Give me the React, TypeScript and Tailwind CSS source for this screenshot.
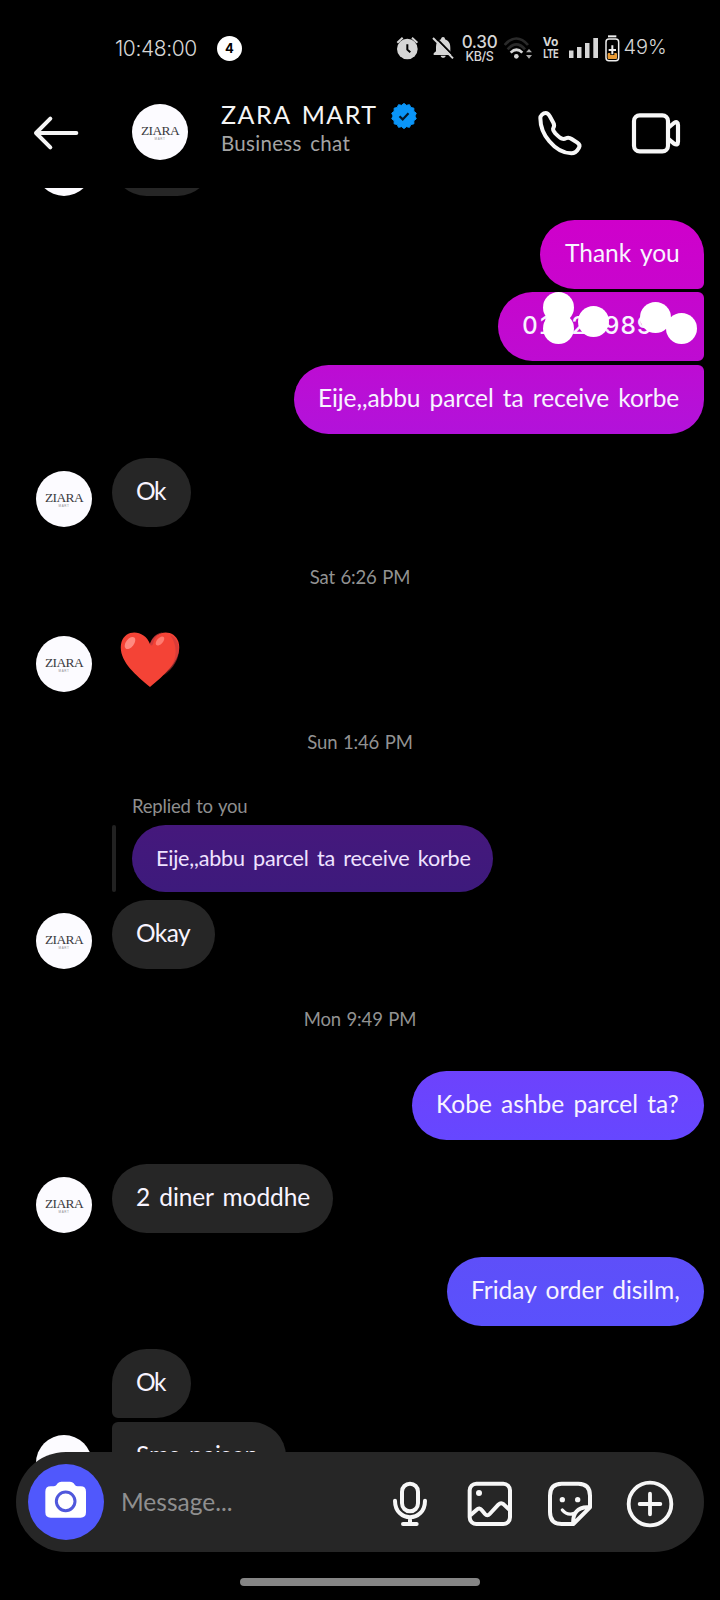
import type { ReactNode } from "react";

const badgePoints = Array.from({ length: 28 }, (_, i) => {
  const radius = i % 2 === 0 ? 12.6 : 10.9;
  const angle = (Math.PI * 2 * i) / 28 - Math.PI / 2;
  return `${(13 + radius * Math.cos(angle)).toFixed(2)},${(13 + radius * Math.sin(angle)).toFixed(2)}`;
}).join(" ");

function Avatar() {
  return (
    <div className="flex size-14 shrink-0 flex-col items-center justify-center rounded-full bg-[#fcfbff] text-[#3a3a40]">
      <span className="font-['Liberation_Serif',serif] text-[13.5px] leading-[15px] tracking-[-0.6px] whitespace-nowrap">
        ZIARA
      </span>
      <span className="-mt-px font-['Liberation_Sans',sans-serif] text-[3px] leading-[5px] tracking-[0.6px] text-[#8d8d92]">
        MART
      </span>
    </div>
  );
}

function Bubble({ className, children }: { className: string; children?: ReactNode }) {
  return (
    <div
      className={`relative flex h-[69px] shrink-0 items-center pb-[3px] pl-6 text-[24.5px] whitespace-pre text-[#f8f4ff] ${className}`}
    >
      {children}
    </div>
  );
}

function Incoming({ avatar = true, className = "", children }: { avatar?: boolean; className?: string; children: ReactNode }) {
  return (
    <div className={`flex min-h-[69px] shrink-0 items-end pl-9 ${className}`}>
      <div className="w-[76px] shrink-0">{avatar && <Avatar />}</div>
      {children}
    </div>
  );
}

function Stamp({ children }: { children: ReactNode }) {
  return (
    <div className="flex h-24 shrink-0 items-center justify-center pt-[5px] text-[18.5px] tracking-[-0.15px] text-[#929292] [word-spacing:1px]">
      <span className="whitespace-nowrap">{children}</span>
    </div>
  );
}

function Blob({ className }: { className: string }) {
  return <i className={`absolute size-[31px] rounded-full bg-white ${className}`} />;
}

function StatusBar() {
  return (
    <div className="flex h-[76px] shrink-0 items-start pt-[35px] font-['Inter','Liberation_Sans',sans-serif] text-[#d6d6d6] [word-spacing:0px]">
      <span className="ml-[115px] w-[102px] pt-px text-[21px] leading-[26px] font-light tracking-[-0.4px]">10:48:00</span>
      <span className="mt-px flex size-[25px] items-center justify-center rounded-full bg-white text-[13px] font-bold text-black">
        4
      </span>
      <svg className="mt-px ml-[154px]" width="23" height="25" viewBox="108 48 69 75" fill="none">
        <circle cx="142" cy="87" r="31" fill="#d6d6d6" />
        <path d="M112 68L128 53M172 68L156 53" stroke="#d6d6d6" strokeWidth="6" />
        <path d="M142 73V89L151 97" stroke="#000" strokeWidth="6" />
      </svg>
      <svg className="mt-px ml-[12.5px]" width="23" height="25" viewBox="214 48 69 75" fill="none">
        <path d="M247 51C252 51 253 54 253 58C266 63 269 72 269 84V98L275 105H219V100L226 94V80C226 69 231 61 241 58C241 54 243 51 247 51ZM240 107H255C254 115 241 115 240 107Z" fill="#d6d6d6" />
        <path d="M222 50L284 113" stroke="#000" strokeWidth="6" />
        <path d="M217 54L277 115" stroke="#d6d6d6" strokeWidth="6" />
      </svg>
      <div className="-mt-px ml-[7px] flex w-[36px] flex-col items-center font-medium">
        <span className="text-[17px] leading-[17px] tracking-[-0.3px]">0.30</span>
        <span className="text-[12.5px] leading-[12px] tracking-[-0.4px]">KB/S</span>
      </div>
      <svg className="ml-[6px]" width="29" height="26" viewBox="432 45 87 78" fill="none">
        <path d="M434 75C456 49 482 49 504 75M443 88C460 68 478 68 495 88" stroke="#2a2a2a" strokeWidth="8" />
        <path d="M452 98C463 87 476 87 487 98" stroke="#d6d6d6" strokeWidth="8" />
        <circle cx="469" cy="109" r="7" fill="#d6d6d6" />
        <path d="M498 97L507 87L516 97ZM498 105L507 116L516 105Z" fill="#a8a8a8" />
      </svg>
      <div className="ml-[9px] flex w-[18px] flex-col items-center text-[12px] leading-[12px] font-bold">
        <span className="mt-px">Vo</span>
        <span className="scale-x-[.78] tracking-[-0.5px]">LTE</span>
      </div>
      <svg className="mt-[3px] ml-[9px]" width="29" height="20" viewBox="0 0 29 20" fill="#d6d6d6">
        <path d="M0 12.500h4.500V20H0zM8 9h4.500v11H8zM16 5h4.500v15H16zM24.300 0H29v20h-4.700z" />
      </svg>
      <svg className="ml-[7px]" width="15" height="27" viewBox="735 45 45 81" fill="none">
        <path d="M744 49H769" stroke="#eee" strokeWidth="6" />
        <rect x="743" y="99" width="28" height="18" rx="3" fill="#e79a35" />
        <rect x="738" y="57" width="38" height="65" rx="9" stroke="#eee" strokeWidth="4.500" />
        <path d="M757 74V105M744 90H770" stroke="#000" strokeWidth="12" />
        <path d="M757 76V103M746 90H768" stroke="#eee" strokeWidth="6" />
      </svg>
      <span className="ml-1 text-[20px] leading-[24px] font-light">49%</span>
    </div>
  );
}

function Header() {
  return (
    <header className="flex h-[112px] shrink-0 items-center">
      <svg className="mt-px ml-8" width="48" height="38" viewBox="96 281 144 114" fill="none" stroke="#f5f5f5" strokeWidth="12" strokeLinecap="round" strokeLinejoin="round">
        <path d="M109 338H229M151 295L108 338L151 381" />
      </svg>
      <div className="ml-[52px]">
        <Avatar />
      </div>
      <div className="ml-[33px] flex w-[315px] flex-col pb-1.5">
        <div className="flex h-7 items-center">
          <span className="w-[170px] pb-0.5 text-[25px] tracking-[1.5px] whitespace-nowrap text-[#f5f5f5]">ZARA MART</span>
          <svg width="26" height="26" viewBox="0 0 26 26" fill="none">
            <polygon points={badgePoints} fill="#0a95f8" stroke="#0a95f8" strokeLinejoin="round" />
            <path d="M8.500 13.300L11.700 16.400L17.500 10.300" stroke="#04182a" strokeWidth="2.200" />
          </svg>
        </div>
        <span className="text-[20.5px] leading-[26px] tracking-[0.3px] whitespace-nowrap text-[#a4a4a4]">Business chat</span>
      </div>
      <svg className="mt-px" width="48" height="48" viewBox="528 265 144 144" fill="none" stroke="#f7f7f7" strokeWidth="12" strokeLinejoin="round">
        <path d="M541 292C541 285 549 277 557 277C563 277 566 281 569 286L580 306C584 313 583 317 580 322C577 327 580 331 586 338C592 344 600 352 606 354C611 356 614 355 618 353C624 350 629 351 635 355L652 366C659 371 660 376 657 381C652 390 645 398 634 398C610 398 588 386 568 362C551 342 541 318 541 292Z" />
      </svg>
      <svg className="mt-px ml-[45px]" width="54" height="48" viewBox="807 265 162 144" fill="none" stroke="#f7f7f7" strokeWidth="12.500" strokeLinejoin="round">
        <rect x="822" y="284" width="102" height="108" rx="17" />
        <path d="M924 322L942 307Q954 300 954 313V363Q954 376 942 369L924 354" />
      </svg>
    </header>
  );
}

function Heart() {
  return (
    <svg className="mb-[5px] ml-2" width="60" height="55" viewBox="0 0 60 55">
      <path d="M30 12C25-2 6-4 1.500 10C-3 27 14 42 30 55C46 42 63 27 58.500 10C54-4 35-2 30 12Z" fill="#f44336" />
      <path d="M50 3C58 13 59 30 43 44C64 29 62 8 50 3Z" fill="#c6383c" opacity=".6" />
      <path d="M30 12C32 5 37 1 43 .500C37 2 34 7 33 12Q31 15 30 12Z" fill="#c6383c" opacity=".8" />
      <ellipse cx="10" cy="11" rx="4" ry="7" transform="rotate(38 10 11)" fill="#ff8a80" />
      <ellipse cx="40" cy="9" rx="3" ry="5.500" transform="rotate(42 40 9)" fill="#ff7b70" />
    </svg>
  );
}

function Composer() {
  return (
    <div className="absolute inset-x-4 bottom-12 flex h-[100px] items-center rounded-full bg-[#262626] pl-3">
      <div className="flex size-[76px] items-center justify-center rounded-full bg-[#5058fc]">
        <svg className="-mt-1" width="42" height="38" viewBox="136 274 126 114">
          <path d="M153 290H162C168 290 170 286 174 281Q178 276 185 276H211Q218 276 222 281C226 286 228 290 234 290H243Q259 290 259 306V368Q259 384 243 384H153Q137 384 137 368V306Q137 290 153 290Z" fill="#fff" />
          <circle cx="198" cy="335" r="28" fill="none" stroke="#5058dc" strokeWidth="9" />
        </svg>
      </div>
      <span className="ml-[17px] w-[271px] text-[24.5px] text-[#8f8f8f]">Message...</span>
      <svg className="mt-1" width="36" height="46" viewBox="96 273 108 138" fill="none" stroke="#f7f7f7" strokeWidth="12" strokeLinecap="round">
        <rect x="126" y="281" width="48" height="83" rx="24" />
        <path d="M105 332C105 398 195 398 195 332M150 384V400M129 402H170" />
      </svg>
      <svg className="mt-1 ml-[39px]" width="46" height="46" viewBox="321 273 138 138" fill="none" stroke="#f7f7f7" strokeWidth="12" strokeLinejoin="round">
        <rect x="329" y="281" width="121" height="121" rx="20" />
        <circle cx="357" cy="309" r="9" fill="#f7f7f7" stroke="none" />
        <path d="M331 376L350 359Q358 351 365 360L375 372Q382 380 389 372L415 344Q423 336 431 343L450 361" />
      </svg>
      <svg className="mt-1 ml-[34px]" width="46" height="46" viewBox="561 273 138 138" fill="none" stroke="#f7f7f7" strokeWidth="12" strokeLinejoin="round" strokeLinecap="round">
        <path d="M640 402H605Q570 402 570 366V317Q570 281 605 281H655Q690 281 690 317V352L640 402C637 372 652 349 688 352" />
        <path d="M607 360C616 371 630 375 643 370" strokeWidth="10" />
        <circle cx="607" cy="329" r="8" fill="#f7f7f7" stroke="none" />
        <circle cx="653" cy="329" r="8" fill="#f7f7f7" stroke="none" />
      </svg>
      <svg className="mt-1 ml-[33px]" width="48" height="48" viewBox="798 270 144 144" fill="none" stroke="#f7f7f7" strokeWidth="11.500" strokeLinecap="round">
        <circle cx="870" cy="342" r="64" />
        <path d="M870 311V373M839 342H901" />
      </svg>
    </div>
  );
}

export default function App() {
  return (
    <div className="relative flex h-[1600px] w-[720px] flex-col overflow-hidden bg-black font-['Lato','Liberation_Sans',sans-serif] [word-spacing:3px]">
      <StatusBar />
      <Header />
      <main className="flex min-h-0 flex-1 flex-col overflow-hidden">
        <div className="-mt-[61px] flex shrink-0 items-end pl-9">
          <div className="mr-5 size-14 rounded-full bg-[#fcfbff]" />
          <Bubble className="w-[100px] rounded-[34.5px] bg-[#262626]" />
        </div>
        <div className="mt-6 flex shrink-0 flex-col items-end pr-4">
          <Bubble className="w-[164px] rounded-[34.5px] rounded-br-[6px] bg-linear-to-b from-[#cf00cb] to-[#c805cd] pl-[25px]">Thank you</Bubble>
          <Bubble className="mt-[3px] w-[206px] rounded-l-[34.5px] rounded-r-[6px] bg-linear-to-b from-[#c606cd] to-[#be0bd2] font-['Inter','Liberation_Sans',sans-serif] font-medium">
            <span className="tracking-[0.5px] [font-variant-numeric:tabular-nums]">{"01\u20072\u2007989"}</span>
            <Blob className="top-0 left-[45px]" />
            <Blob className="top-[21px] left-[45px]" />
            <Blob className="top-[14px] left-[80px]" />
            <Blob className="top-[10px] left-[142px]" />
            <Blob className="top-[21px] left-[168px]" />
          </Bubble>
          <Bubble className="mt-1 w-[410px] rounded-[34.5px] rounded-tr-[6px] bg-linear-to-b from-[#bd0cd3] to-[#b212da] tracking-[-0.08px]">Eije,,abbu parcel ta receive korbe</Bubble>
        </div>
        <Incoming className="mt-6">
          <Bubble className="w-[79px] rounded-[34.5px] bg-[#262626] tracking-[-1.3px]">Ok</Bubble>
        </Incoming>
        <Stamp>Sat 6:26 PM</Stamp>
        <Incoming>
          <Heart />
        </Incoming>
        <Stamp>Sun 1:46 PM</Stamp>
        <div className="h-[37px] shrink-0 pt-[6px] pl-[132px] text-[18.5px] leading-6 tracking-[-0.2px] text-[#8f8f8f] [word-spacing:1px]">Replied to you</div>
        <div className="flex shrink-0 pl-28">
          <div className="w-1 rounded-full bg-[#222]" />
          <div className="ml-4 flex h-[67px] w-[361px] items-center rounded-full bg-linear-to-b from-[#45187c] to-[#3d1a7c] pl-6 text-[21.6px] tracking-[-0.22px] whitespace-nowrap text-[#efe2ff]">
            Eije,,abbu parcel ta receive korbe
          </div>
        </div>
        <Incoming className="mt-2">
          <Bubble className="w-[103px] rounded-[34.5px] bg-[#262626] tracking-[-0.6px]">Okay</Bubble>
        </Incoming>
        <Stamp>Mon 9:49 PM</Stamp>
        <Bubble className="mt-1.5 mr-4 w-[292px] self-end rounded-[34.5px] bg-linear-to-b from-[#6d42fc] to-[#6647ff]">Kobe ashbe parcel ta?</Bubble>
        <Incoming className="mt-6">
          <Bubble className="w-[221px] rounded-[34.5px] bg-[#262626] tracking-[-0.1px]">2 diner moddhe</Bubble>
        </Incoming>
        <Bubble className="mt-6 mr-4 w-[257px] self-end rounded-[34.5px] bg-linear-to-b from-[#5e4ff9] to-[#5a51fc]">Friday order disilm,</Bubble>
        <Incoming avatar={false} className="mt-[23px]">
          <Bubble className="w-[79px] rounded-[34.5px] rounded-bl-[6px] bg-[#262626] tracking-[-1.3px]">Ok</Bubble>
        </Incoming>
        <Incoming className="mt-1">
          <Bubble className="w-[174px] rounded-[34.5px] rounded-tl-[6px] bg-[#262626]">Sms paisen</Bubble>
        </Incoming>
      </main>
      <Composer />
      <div className="absolute bottom-[14px] left-[240px] h-2 w-60 rounded-full bg-[#858585]" />
    </div>
  );
}
